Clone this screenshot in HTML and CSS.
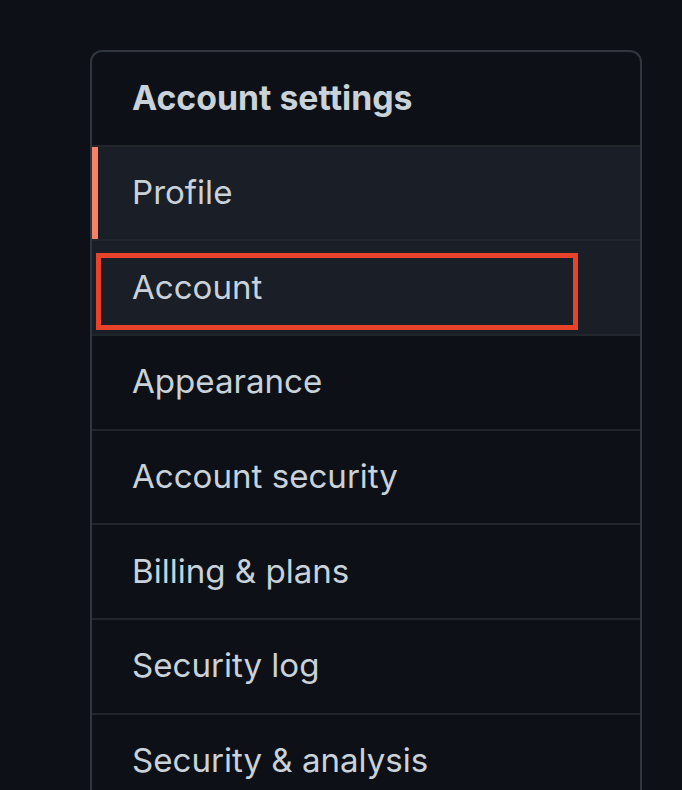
FILE: index.html
```html
<!DOCTYPE html>
<html lang="en">
<head>
<meta charset="utf-8">
<title>Account settings</title>
<link rel="stylesheet" href="styles.css">
</head>
<body>
<nav class="menu">
  <h3 class="menu-heading">Account settings</h3>
  <a class="menu-item selected" href="#">Profile</a>
  <a class="menu-item hovered" href="#">Account<span class="highlight"></span></a>
  <a class="menu-item" href="#">Appearance</a>
  <a class="menu-item" href="#">Account security</a>
  <a class="menu-item" href="#">Billing &amp; plans</a>
  <a class="menu-item" href="#">Security log</a>
  <a class="menu-item" href="#">Security &amp; analysis</a>
</nav>
</body>
</html>
```
FILE: styles.css
```css
html, body {
  margin: 0;
  background: #0d1117;
}
body {
  padding: 50px 0 0 90px;
  height: 790px;
  box-sizing: border-box;
  overflow: hidden;
  font-family: Inter, "Liberation Sans", sans-serif;
  color: #c9d1d9;
}
.menu {
  width: 552px;
  box-sizing: border-box;
  border: 2px solid #30363d;
  border-radius: 12px;
  background: #0d1117;
  display: flex;
  flex-direction: column;
}
.menu-heading {
  margin: 0;
  height: 92.67px;
  display: flex;
  align-items: center;
  padding: 0 0 2px 40px;
  box-sizing: border-box;
  height: 94.67px;
  font-size: 33.8px;
  font-weight: 700;
  border-bottom: 2px solid #21262d;
}
.menu-item {
  position: relative;
  height: 94.67px;
  box-sizing: border-box;
  display: flex;
  align-items: center;
  padding: 0 0 2px 40px;
  font-size: 33.1px;
  color: #c9d1d9;
  text-decoration: none;
  border-bottom: 2px solid #21262d;
}
.menu-item.selected {
  background: #1a1e26;
}
.menu-item.selected::before {
  content: "";
  position: absolute;
  left: 0;
  top: 0;
  bottom: 0;
  width: 6px;
  background: #f78166;
}
.menu-item.hovered {
  background: #1a1e26;
}
.highlight {
  position: absolute;
  left: 4px;
  top: 12px;
  width: 482px;
  height: 77px;
  box-sizing: border-box;
  border: 5px solid #e8432a;
}
```
